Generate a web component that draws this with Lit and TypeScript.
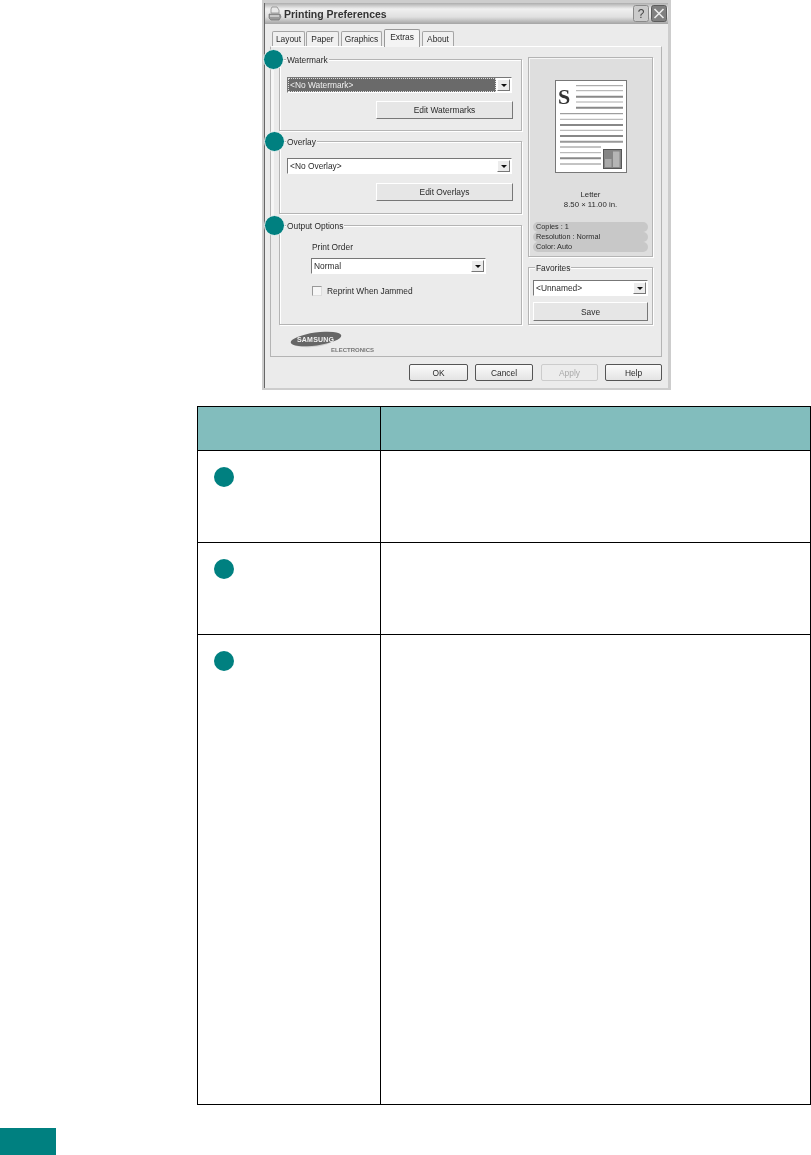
import { LitElement, html, css, svg } from "lit";
import { customElement } from "lit/decorators.js";

const pageLines = [
  [21, 68, 5.7, 1, "#999"], [21, 68, 10.7, 1, "#aaa"], [21, 68, 16.7, 2, "#888"], [21, 68, 22, 1, "#aaa"], [21, 68, 27.7, 2, "#888"],
  [5, 68, 33.7, 1, "#888"], [5, 68, 39.3, 1, "#aaa"], [5, 68, 45, 2, "#888"], [5, 68, 50.3, 1, "#aaa"], [5, 68, 56, 2, "#888"], [5, 68, 61.7, 2, "#999"],
  [5, 46, 67, 1, "#888"], [5, 46, 72.7, 1, "#aaa"], [5, 46, 78.3, 2, "#888"], [5, 46, 84, 1, "#888"],
] as const;

@customElement("app-root")
export class AppRoot extends LitElement {
  static styles = css`
    :host { display: block; background: #fff; font-family: "Liberation Sans", Arial, sans-serif; color: #2a2a2a; }
    .shot { position: relative; margin-left: 262px; width: 409px; height: 390px; margin-bottom: 16px; }
    .dialog { box-sizing: border-box; width: 409px; height: 390px; border: solid #cdcdcd; border-width: 3px 3px 2px 2px; background: #ebebeb; display: flex; flex-direction: column; font-size: 8.4px; line-height: 10px; filter: blur(0.4px); }
    .win { flex: 1; border-left: 1px solid #666; display: flex; flex-direction: column; min-height: 0; }
    .title { height: 21px; flex: none; box-sizing: border-box; display: flex; align-items: center; padding: 1px 1px 0 3px; gap: 2px; border-bottom: 1px solid #a8a8a8; background: linear-gradient(#adadad, #f0f0f0 30%, #e0e0e0 70%, #acacac); }
    .title-text { font-size: 10.5px; font-weight: 700; color: #333; flex: 1; line-height: 12px; }
    .tbtn { width: 16px; height: 17px; border-radius: 2px; box-sizing: border-box; display: block; }
    .body { flex: 1; display: flex; flex-direction: column; padding: 5px 6px 0 5px; min-height: 0; }
    .tabs { display: flex; align-items: flex-end; height: 17px; padding-left: 2px; gap: 1px; }
    .tab { box-sizing: border-box; height: 15px; border: 1px solid #a5a5a5; border-bottom: none; border-radius: 2px 2px 0 0; background: #f0f0f0; display: flex; align-items: center; justify-content: center; }
    .t-layout { width: 33px; } .t-paper { width: 33px; margin-right: 1px; } .t-graphics { width: 41px; margin-right: 1px; } .t-about { width: 32px; margin-left: 1px; }
    .t-extras { width: 36px; height: 18px; background: #f4f4f4; border-color: #999; margin-bottom: -1px; position: relative; padding-bottom: 4px; }
    .panel { box-sizing: border-box; height: 311px; border: 1px solid #b4b4b4; border-top-color: #fff; background: #ebebeb; padding: 10px 0 0 8px; display: flex; flex-direction: column; }
    .cols { display: grid; grid-template-columns: 243px 125px; column-gap: 6px; }
    .left, .right { display: flex; flex-direction: column; }
    .left { padding-top: 2px; }
    .group { position: relative; box-sizing: border-box; border: 1px solid #b4b4b4; box-shadow: inset 1px 1px 0 #fff, 1px 1px 0 #fff; padding: 17px 9px 0 7px; display: flex; flex-direction: column; }
    .legend { position: absolute; top: -5px; left: 6px; background: #ebebeb; padding: 0 1px; line-height: 10px; }
    .g-wm { height: 72px; margin-bottom: 10px; }
    .g-ov { height: 73px; margin-bottom: 11px; padding-top: 16px; }
    .g-out { height: 100px; padding: 16px 9px 0 31px; }
    .g-fav { height: 58px; margin-top: 10px; padding: 12px 4px 0 4px; }
    .combo { box-sizing: border-box; height: 16px; display: flex; background: #fff; border: 1px solid; border-color: #777 #fff #fff #777; align-items: stretch; flex: none; }
    .combo-text { flex: 1; padding: 2px 0 0 2px; }
    .sel .combo-text { background: #6a6a6a; color: #f0f0f0; outline: 1px dotted #ddd; outline-offset: -1px; }
    .arrow { width: 13px; margin: 1px; flex: none; background: #ececec; border: 1px solid; border-color: #fff #777 #777 #fff; box-sizing: border-box; display: flex; align-items: center; justify-content: center; }
    .arrow::after { content: ""; border: 3.5px solid transparent; border-top: 3.5px solid #111; border-bottom: none; }
    .flat { box-sizing: border-box; background: #e6e6e6; border: 1px solid; border-color: #fff #777 #777 #fff; display: flex; align-items: center; justify-content: center; }
    .edit { width: 137px; height: 18px; align-self: flex-end; margin: 8px -1px 0 0; }
    .edit2 { margin-top: 9px; }
    .fav-save { height: 19px; margin-top: 6px; }
    .print { margin: 0 0 6px 1px; line-height: 10px; }
    .narrow { width: 175px; }
    .check { display: flex; align-items: center; gap: 5px; margin: 12px 0 0 1px; }
    .box { width: 10px; height: 10px; box-sizing: border-box; background: #f6f6f6; border: 1px solid; border-color: #999 #ddd #ddd #999; }
    .preview { box-sizing: border-box; height: 200px; border: 1px solid #b4b4b4; box-shadow: 1px 1px 0 #fff, inset 1px 1px 0 #f6f6f6; background: #dedede; padding: 22px 4px 0 4px; display: flex; flex-direction: column; }
    .page { display: block; margin-left: 22px; flex: none; }
    .caption { margin-top: 17px; text-align: center; line-height: 10px; font-size: 7.8px; }
    .pills { margin-top: 12px; display: flex; flex-direction: column; }
    .pill { height: 10px; border-radius: 5px; background: #c8c8c8; padding-left: 3px; font-size: 7.3px; line-height: 10px; }
    .brand { height: 24px; padding: 6px 0 0 11px; display: flex; }
    .brand svg { display: block; }
    .foot { display: flex; justify-content: flex-end; gap: 7px; padding-top: 7px; }
    .btn { box-sizing: border-box; height: 17px; width: 58px; background: linear-gradient(#fafafa, #e4e4e4); border: 1px solid #555; border-radius: 2px; display: flex; align-items: center; justify-content: center; }
    .b-ok { width: 59px; } .b-apply { width: 57px; margin-left: 1px; } .b-help { width: 57px; }
    .btn.off { border-color: #ccc; background: #ececec; color: #aaa; }
    .link { position: absolute; left: 9px; top: 60px; width: 3px; height: 165px; background: #f6f6f6; }
    .marker { position: absolute; box-sizing: border-box; width: 21px; height: 21px; border-radius: 50%; background: #008080; border: 1.5px solid #f4f4f4; }
    .m1 { left: 1px; top: 49px; } .m2 { left: 2px; top: 131px; } .m3 { left: 2px; top: 215px; }
    .table { display: grid; box-sizing: border-box; margin-left: 197px; width: 614px; grid-template-columns: 182px 429px; grid-template-rows: 43px 91px 91px 469px; gap: 1px; background: #000; border: 1px solid #000; }
    .cell { background: #fff; padding: 16px 0 0 16px; }
    .head { background: #82bdbd; }
    .dot { width: 20px; height: 20px; border-radius: 50%; background: #008080; }
    .tab-mark { margin-top: 23px; width: 56px; height: 27px; background: #008080; }
  `;

  private printerIcon() {
    return svg`<svg class="ico" width="14" height="15" viewBox="0 0 14 15">
      <path d="M4 1h5l2 3v3H3V3z" fill="#e8e8e8" stroke="#8a8a8a" stroke-width=".8"/>
      <path d="M1 8h11l1 3-2 3H3L1 12z" fill="#9a9a9a" stroke="#666" stroke-width=".6"/>
      <path d="M2 9h9v2H2z" fill="#c8c8c8"/>
    </svg>`;
  }

  private page() {
    return svg`<svg class="page" width="72" height="93" viewBox="0 0 72 93">
      <rect x=".5" y=".5" width="71" height="92" fill="#fff" stroke="#777"/>
      ${pageLines.map(([a, b, y, w, c]) => svg`<line x1=${a} x2=${b} y1=${y} y2=${y} stroke-width=${w} stroke=${c}/>`)}
      <text x="3" y="24" font-family="Liberation Serif, serif" font-weight="700" font-size="22" fill="#333">S</text>
      <rect x="48.5" y="69.5" width="18" height="19" fill="#858585" stroke="#555"/>
      <rect x="50" y="79" width="6.5" height="8" fill="#aaa"/>
      <rect x="58" y="71.5" width="6.5" height="15.5" fill="#b5b5b5"/>
    </svg>`;
  }

  private logo() {
    return svg`<svg width="84" height="24" viewBox="0 0 84 24">
      <ellipse cx="22" cy="11.5" rx="19" ry="4.5" transform="rotate(-4 22 11.5)" fill="#cfcfcf"/>
      <ellipse cx="26" cy="8" rx="25.5" ry="6.5" transform="rotate(-8 26 8)" fill="#666"/>
      <text x="7" y="10.5" font-size="7" font-weight="700" letter-spacing=".2" fill="#f2f2f2" font-family="Liberation Sans, sans-serif">SAMSUNG</text>
      <text x="41" y="21" font-size="6" font-weight="700" fill="#777" font-family="Liberation Sans, sans-serif">ELECTRONICS</text>
    </svg>`;
  }

  render() {
    return html`
      <div class="shot">
        <div class="dialog"><div class="win">
          <div class="title">
            ${this.printerIcon()}
            <span class="title-text">Printing Preferences</span>
            <svg class="tbtn" viewBox="0 0 16 17"><rect x=".5" y=".5" width="15" height="16" rx="2" fill="#cbcbcb" stroke="#8a8a8a"/><text x="8" y="13" text-anchor="middle" font-size="12" fill="#444" font-family="Liberation Sans, sans-serif">?</text></svg>
            <svg class="tbtn" viewBox="0 0 16 17"><rect x=".5" y=".5" width="15" height="16" rx="2" fill="#808080" stroke="#5c5c5c"/><path d="M3.5 4l9 9M12.5 4l-9 9" stroke="#ececec" stroke-width="1.6"/></svg>
          </div>
          <div class="body">
            <div class="tabs">
              <div class="tab t-layout">Layout</div><div class="tab t-paper">Paper</div><div class="tab t-graphics">Graphics</div><div class="tab t-extras">Extras</div><div class="tab t-about">About</div>
            </div>
            <div class="panel">
              <div class="cols">
                <div class="left">
                  <div class="group g-wm">
                    <span class="legend">Watermark</span>
                    <div class="combo sel"><span class="combo-text">&lt;No Watermark&gt;</span><span class="arrow"></span></div>
                    <div class="flat edit">Edit Watermarks</div>
                  </div>
                  <div class="group g-ov">
                    <span class="legend">Overlay</span>
                    <div class="combo"><span class="combo-text">&lt;No Overlay&gt;</span><span class="arrow"></span></div>
                    <div class="flat edit edit2">Edit Overlays</div>
                  </div>
                  <div class="group g-out">
                    <span class="legend">Output Options</span>
                    <div class="print">Print Order</div>
                    <div class="combo narrow"><span class="combo-text">Normal</span><span class="arrow"></span></div>
                    <label class="check"><span class="box"></span>Reprint When Jammed</label>
                  </div>
                </div>
                <div class="right">
                  <div class="preview">
                    ${this.page()}
                    <div class="caption">Letter<br />8.50 × 11.00 in.</div>
                    <div class="pills">
                      <div class="pill">Copies : 1</div>
                      <div class="pill">Resolution : Normal</div>
                      <div class="pill">Color: Auto</div>
                    </div>
                  </div>
                  <div class="group g-fav">
                    <span class="legend">Favorites</span>
                    <div class="combo"><span class="combo-text">&lt;Unnamed&gt;</span><span class="arrow"></span></div>
                    <div class="flat fav-save">Save</div>
                  </div>
                </div>
              </div>
              <div class="brand">${this.logo()}</div>
            </div>
            <div class="foot">
              <div class="btn b-ok">OK</div><div class="btn">Cancel</div><div class="btn b-apply off">Apply</div><div class="btn b-help">Help</div>
            </div>
          </div>
        </div></div>
        <div class="link"></div>
        <div class="marker m1"></div><div class="marker m2"></div><div class="marker m3"></div>
      </div>
      <div class="table">
        <div class="cell head"></div><div class="cell head"></div>
        <div class="cell"><div class="dot"></div></div><div class="cell"></div>
        <div class="cell"><div class="dot"></div></div><div class="cell"></div>
        <div class="cell"><div class="dot"></div></div><div class="cell"></div>
      </div>
      <div class="tab-mark"></div>
    `;
  }
}
